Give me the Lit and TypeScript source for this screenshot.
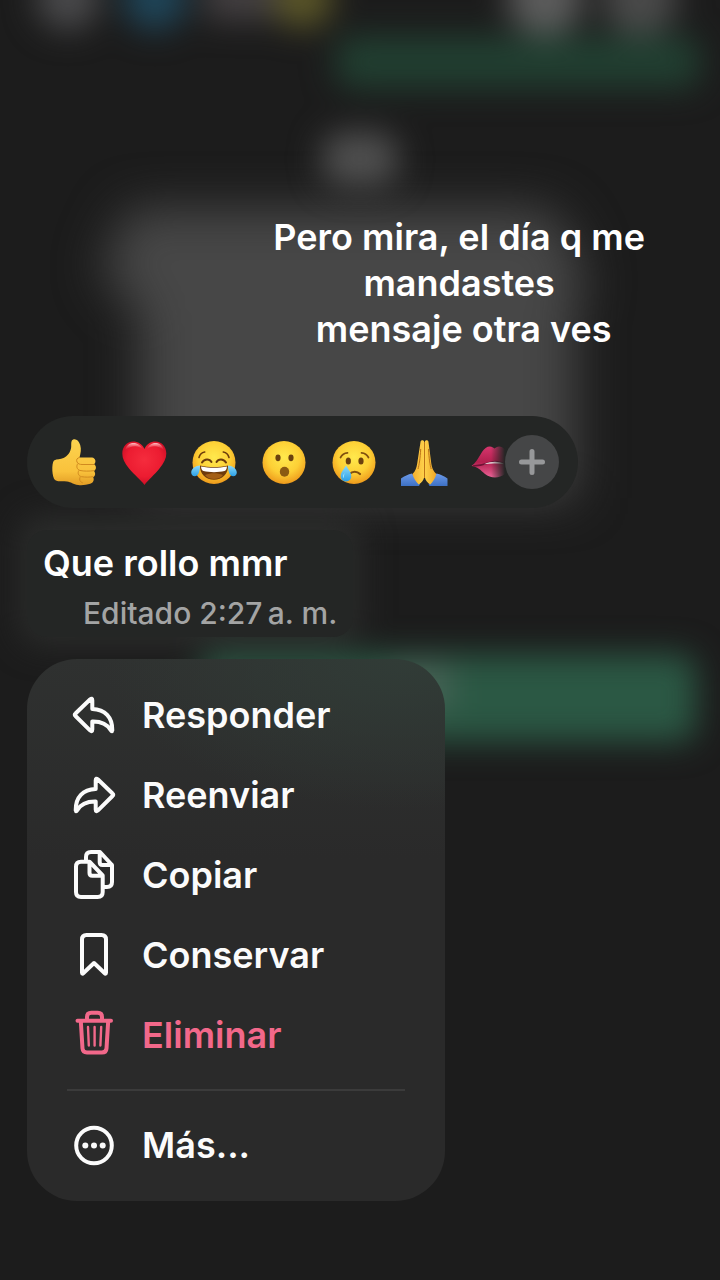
import { LitElement, css, html, svg } from "lit";
import type { SVGTemplateResult } from "lit";
import { customElement, property } from "lit/decorators.js";
import { classMap } from "lit/directives/class-map.js";

const face = svg`
  <defs>
    <radialGradient id="face" cx="50%" cy="38%" r="62%">
      <stop offset="0" stop-color="#ffe94d" />
      <stop offset="0.6" stop-color="#fdcf35" />
      <stop offset="1" stop-color="#ee9a1c" />
    </radialGradient>
    <linearGradient id="tear" x1="0" y1="0" x2="0" y2="1">
      <stop offset="0" stop-color="#8fdcfb" />
      <stop offset="1" stop-color="#2a9fe6" />
    </linearGradient>
  </defs>
  <circle cx="24" cy="24.5" r="21.5" fill="url(#face)" />
`;

const emojis: Record<string, SVGTemplateResult> = {
  "Me gusta": svg`
    <defs>
      <linearGradient id="skin" x1="0" y1="0" x2="0" y2="1">
        <stop offset="0" stop-color="#fdd34f" />
        <stop offset="0.7" stop-color="#f9c23c" />
        <stop offset="1" stop-color="#e39d25" />
      </linearGradient>
    </defs>
    <path fill="url(#skin)" d="M4 22.500c3-1.700 6.500-1 9.500-2.500 4-2 7.300-6 7.700-11 .2-3.500-.4-6.500 2-7.500 3-1 5.800 1.500 7 5.500 1.300 4.300.5 8-.7 12.500H42c3.500.3 4.700 4.700 2 6.800 2.700 1.700 2.500 5.400 0 6.700 1.800 2 1.500 5-.8 6.200 1.300 2.500.2 5.500-3 6.600-3.500 1.200-8.700 1.700-12 1.200-5-.8-7.200-3-11.200-3.500C11.500 43 8 44 5 42c-3-2.500-3.700-16.500-1-19.500z" />
    <path fill="none" stroke="#d18a1f" stroke-width="1" stroke-linecap="round" d="M29.500 19.500c-2.500.5-3.500 2-2.500 4.500 1 2 3 2.500 5 2.500h12M27.500 26c-1.500 2.500-.5 5.500 2.500 6.500 4 .8 9 .8 14 .2M28.500 33c-1 2.500 0 5 3 5.700 4 .6 8 .6 11.500 0M30 39.500c-1 2.300 0 4.500 2.500 5.300" />
  `,
  "Me encanta": svg`
    <defs>
      <radialGradient id="heart" cx="50%" cy="42%" r="60%">
        <stop offset="0" stop-color="#f52c3d" />
        <stop offset="0.65" stop-color="#ec1c31" />
        <stop offset="1" stop-color="#c80d25" />
      </radialGradient>
      <linearGradient id="shine" x1="0" y1="0" x2="0" y2="1">
        <stop offset="0" stop-color="#ffc4c8" />
        <stop offset="1" stop-color="#f52c3d" stop-opacity="0" />
      </linearGradient>
    </defs>
    <path fill="url(#heart)" d="M24.500 47C21 42 14 36.500 9 30.500 4.500 25 2.300 20.500 2.300 15.500 2.300 8.500 7 3.500 13 3.500c5 0 9.300 2.500 11.500 7.500C26.500 6 30.500 3.500 35.500 3.500 41.800 3.500 46.300 8.500 46.300 15.500c0 5-2.300 9.500-6.800 15C34.800 36.500 28 42 24.500 47z" />
    <path fill="url(#shine)" d="M5 12.500C6 7.500 9.500 5 13.500 5c4 0 7.500 2.500 9 6-5-4-11.500-3.500-17.500 1.500zM27 11c1.500-3.500 4.500-6 8.500-6 4 0 7.500 2.500 8.500 7.500-5.500-5-12-5.500-17-1.500z" />
  `,
  "Me divierte": svg`
    ${face}
    <g fill="none" stroke="#6b3c0c" stroke-width="1.600" stroke-linecap="round">
      <path d="M9 19.500c.8-3 3-5 5.700-5.500M39 19.500c-.8-3-3-5-5.700-5.500" />
      <path stroke-width="2" d="M12 24.500c2.500-4 7.500-4 9.500-.5M36 24.500c-2.500-4-7.500-4-9.500-.5" />
    </g>
    <path fill="#6e3b0c" d="M10 27.500c9 2 19 2 28 0 .5 8.500-6 14.200-14 14.200S9.500 36 10 27.500z" />
    <path fill="#fff" d="M11 28.500c9 1.800 17 1.800 26 0-.3 2.700-1 4-2.500 4.500-6 1.500-15 1.500-21 0-1.500-.5-2.300-1.800-2.500-4.500z" />
    <path fill="#a35f16" d="M15 37c6-2.500 12-2.500 18 0-2.500 3-5.500 4-9 4s-6.500-1-9-4z" />
    <path fill="url(#tear)" d="M10 27.500C6 27.500 1.200 30.500 1.200 34.500c0 2.300 1.500 3.700 3.500 3.700 4 0 5.300-5.700 5.300-10.700zM38 27.500c4 0 8.800 3 8.800 7 0 2.300-1.500 3.700-3.500 3.700-4 0-5.300-5.700-5.300-10.700z" />
  `,
  "Me asombra": svg`
    ${face}
    <g fill="#6b400e">
      <ellipse cx="18" cy="19.800" rx="2.600" ry="3.400" />
      <ellipse cx="31" cy="19.800" rx="2.600" ry="3.400" />
    </g>
    <ellipse cx="24.500" cy="33.700" rx="4.700" ry="5" fill="#8b5a12" />
  `,
  "Me entristece": svg`
    ${face}
    <g fill="#6b400e">
      <ellipse cx="18.300" cy="23" rx="2.600" ry="3.600" />
      <ellipse cx="31" cy="23" rx="2.600" ry="3.600" />
    </g>
    <g fill="none" stroke="#80500f" stroke-width="1.700" stroke-linecap="round">
      <path d="M10.500 19.500c1.500-3 4-4.500 7-4.700M38.500 19.500c-1.500-3-4-4.500-7-4.700" />
      <path stroke-width="2.200" d="M19.500 36c3-3 7.500-3 10.500 0" />
    </g>
    <path fill="url(#tear)" d="M16 27.500c2 3.500 5.300 6.800 5.300 10.700 0 3-2.300 5.200-5.300 5.200s-5.300-2.200-5.300-5.200c0-3.900 3.300-7.200 5.300-10.700z" />
    <path fill="#a8e9ff" d="M14.500 35c-1.500 2-2 3.500-1 5.200" />
  `,
  Gracias: svg`
    <defs>
      <linearGradient id="sleeve" x1="0" y1="0" x2="0" y2="1">
        <stop offset="0" stop-color="#6d9bea" />
        <stop offset="1" stop-color="#3d70c4" />
      </linearGradient>
      <linearGradient id="palm" x1="0" y1="0" x2="1" y2="0">
        <stop offset="0" stop-color="#f4ae2d" />
        <stop offset="0.5" stop-color="#ffd34c" />
        <stop offset="1" stop-color="#eea628" />
      </linearGradient>
    </defs>
    <path fill="url(#sleeve)" d="M1 40.500c3.500-2.500 7-4 11-5l8 10.500-1 2H1zM47.500 40.500c-3.500-2.500-7-4-11-5l-8 10.500 1 2h18z" />
    <path fill="url(#palm)" d="M20.500 4c0-2 3.500-2.500 3.700 0v35c-.5 3.500-2.500 5.500-5.500 7.500C16 43.500 13.500 40 12.500 36c3-3 4-6 4.700-10.500zM28.500 4c0-2-3.500-2.500-3.700 0v35c.5 3.500 2.500 5.500 5.500 7.500 2.700-3 5-6.500 6-10.500-3-3-4.500-6-5-10.500z" />
    <path fill="none" stroke="#bd7418" stroke-width="1" d="M24.500 4v36M20.700 11c-.5 9-1.500 16-2.700 20M28.500 11c.5 9 1.500 16 2.700 20" />
  `,
  Beso: svg`
    <defs>
      <linearGradient id="lips" x1="0" y1="0" x2="0" y2="1">
        <stop offset="0" stop-color="#d6366d" />
        <stop offset="0.5" stop-color="#b3204f" />
        <stop offset="1" stop-color="#ea6296" />
      </linearGradient>
    </defs>
    <path fill="url(#lips)" d="M1.500 28c4-3 7-8 10.500-14 3-5 7.500-7 11-4.500l1.500 1 1.500-1c3.500-2.500 8-.5 11 4.500 3.500 6 6.500 11 10.500 14-6 .5-8 4-12.500 8-5.500 4.500-14.500 4.500-20 0C10.500 32 7.500 28.500 1.500 28z" />
    <path fill="none" stroke="#701235" stroke-width="1.500" d="M3 28c7-.5 13-2 17-3.500 5-1.500 6-1.500 11 0 4 1.500 9 3 14 3.500" />
    <path fill="#e8d3d8" d="M14 26.200c8-3.200 14-3.200 21 0-7-1-14-1-21 0z" />
  `,
};

const arrow = svg`
  <path d="M5.500 22.500 20 8.500q2.300-2 2.300.8V18C35 18.300 42.500 26 42.300 39.200q-.3 2-1.500 0C37.500 33.500 32 30.300 22.300 30.500v8q0 2.800-2.300.8L5.500 25q-1.500-1.300 0-2.500z" />
`;

const icons: Record<string, SVGTemplateResult> = {
  reply: arrow,
  forward: svg`<g transform="matrix(-1 0 0 1 48 0)">${arrow}</g>`,
  copy: svg`
    <path d="M19.500 10.700H11q-5 0-5 5V41q0 5 5 5h16.700q5 0 5-5V24.500zM19.500 11v11q0 2.700 2.700 2.700h10.500" />
    <path d="M16 10V6q0-5 5-5h9l12 13v17q0 5-5 5h-4M29.700 1.500v9.800q0 2.700 2.700 2.700H42" />
  `,
  bookmark: svg`<path d="M12 8.500Q12 4 16.500 4h15Q36 4 36 8.500V41.500q0 2-1.500.5L24 32 13.500 42q-1.500 1.500-1.500-.5z" />`,
  trash: svg`
    <path d="M7.500 9.700h33.500M17 9V6q0-4.300 4.300-4.300h6.400Q32 1.700 32 6v3M10.800 10l1.700 27.500q.3 4 4.500 4h15q4.200 0 4.500-4L38.200 10" />
    <path stroke-width="2.400" d="M18 16l.8 18.500M24.600 16v18.500M31.200 16l-.8 18.500" />
  `,
  more: svg`
    <circle cx="24" cy="24.500" r="17.800" />
    <g fill="currentColor" stroke="none">
      <circle cx="15.300" cy="24.500" r="3" />
      <circle cx="24" cy="24.500" r="3" />
      <circle cx="32.700" cy="24.500" r="3" />
    </g>
  `,
};

@customElement("chat-backdrop")
export class ChatBackdrop extends LitElement {
  protected override render() {
    return html`
      <svg viewBox="0 0 720 1280" preserveAspectRatio="none" aria-hidden="true">
        <defs>
          <filter
            id="soft"
            x="-50%"
            y="-50%"
            width="200%"
            height="200%"
            color-interpolation-filters="sRGB"
          >
            <feGaussianBlur stdDeviation="16" />
          </filter>
          <filter
            id="softer"
            x="-50%"
            y="-50%"
            width="200%"
            height="200%"
            color-interpolation-filters="sRGB"
          >
            <feGaussianBlur stdDeviation="24" />
          </filter>
        </defs>
        <g filter="url(#softer)">
          <path fill="#474747" d="M130 208h410q30 10 45 75l-10 30v185H140V315l-40-45z" />
        </g>
        <g filter="url(#soft)">
          <circle cx="68" cy="-2" r="32" fill="#4a4a4c" />
          <circle cx="155" cy="-2" r="32" fill="#1f465a" />
          <rect x="205" y="-30" width="70" height="50" fill="#444042" />
          <circle cx="303" cy="-2" r="30" fill="#5c5728" />
          <circle cx="545" cy="-2" r="38" fill="#5c5c5c" />
          <circle cx="640" cy="-2" r="38" fill="#4a4a4a" />
          <rect x="336" y="36" width="364" height="52" rx="16" fill="#213f31" />
          <rect x="322" y="132" width="76" height="54" rx="22" fill="#505050" />
          <rect x="20" y="515" width="340" height="130" rx="20" fill="#2b2c2b" />
          <rect x="200" y="654" width="496" height="88" rx="16" fill="#2b5844" />
          <rect x="390" y="664" width="60" height="44" fill="#4a6558" />
        </g>
      </svg>
    `;
  }

  static override styles = css`
    :host {
      position: absolute;
      inset: 0;
      background: #1c1c1c;
    }
    svg {
      display: block;
      width: 100%;
      height: 100%;
    }
  `;
}

@customElement("reaction-bar")
export class ReactionBar extends LitElement {
  protected override render() {
    return html`
      <div class="strip">
        ${Object.entries(emojis).map(
          ([name, art]) => html`
            <button class="emoji" type="button" aria-label=${name}>
              <svg viewBox="0 0 48 48" aria-hidden="true">${art}</svg>
            </button>
          `,
        )}
      </div>
      <button class="add" type="button" aria-label="Más reacciones">
        <svg viewBox="0 0 54 54" aria-hidden="true">
          <path d="M27 16.500v21M16.500 27h21" />
        </svg>
      </button>
    `;
  }

  static override styles = css`
    :host {
      box-sizing: border-box;
      display: flex;
      align-items: center;
      width: 100%;
      max-width: 551px;
      padding: 19px 19px 19px 12px;
      border-radius: 46px;
      background: #242625;
    }
    button {
      flex: none;
      padding: 0;
      border: 0;
      background: none;
    }
    .strip {
      display: flex;
      flex: 1;
      min-width: 0;
      overflow: hidden;
      mask-image: linear-gradient(to left, transparent, #000 14px);
    }
    .emoji {
      display: flex;
      justify-content: center;
      width: 70px;
    }
    .emoji svg {
      width: 48px;
      height: 48px;
    }
    .add {
      display: flex;
      width: 54px;
      height: 54px;
      border-radius: 50%;
      background: #454647;
    }
    .add path {
      fill: none;
      stroke: #97989a;
      stroke-width: 5;
      stroke-linecap: round;
    }
  `;
}

@customElement("menu-item")
export class MenuItem extends LitElement {
  @property({ type: String })
  icon = "";

  @property({ type: String })
  label = "";

  @property({ type: Boolean })
  danger = false;

  protected override render() {
    return html`
      <button type="button" class=${classMap({ danger: this.danger })}>
        <svg viewBox="0 0 48 48" aria-hidden="true">${icons[this.icon]}</svg>
        <span>${this.label}</span>
      </button>
    `;
  }

  static override styles = css`
    :host {
      display: block;
    }
    button {
      display: flex;
      align-items: center;
      gap: 24px;
      width: 100%;
      height: 80px;
      padding: 0 43px;
      border: 0;
      background: none;
      color: #fbfbfb;
      font: 600 36px/48px Inter, sans-serif;
      text-align: left;
    }
    .danger {
      color: #f2688a;
    }
    svg {
      flex: none;
      width: 48px;
      height: 48px;
      overflow: visible;
      fill: none;
      stroke: currentColor;
      stroke-width: 4;
      stroke-linecap: round;
      stroke-linejoin: round;
    }
  `;
}

@customElement("app-root")
export class AppRoot extends LitElement {
  protected override render() {
    return html`
      <chat-backdrop></chat-backdrop>
      <main>
        <p class="caption">
          Pero mira, el día q me<br />mandastes<br />&nbsp;mensaje otra ves
        </p>
        <reaction-bar></reaction-bar>
        <article class="bubble">
          <p class="message">Que rollo mmr</p>
          <p class="meta">Editado 2:27&#8239;a. m.</p>
        </article>
        <nav class="menu">
          <menu-item icon="reply" label="Responder"></menu-item>
          <menu-item icon="forward" label="Reenviar"></menu-item>
          <menu-item icon="copy" label="Copiar"></menu-item>
          <menu-item icon="bookmark" label="Conservar"></menu-item>
          <menu-item icon="trash" label="Eliminar" danger></menu-item>
          <hr />
          <menu-item icon="more" label="Más..."></menu-item>
        </nav>
      </main>
    `;
  }

  static override styles = css`
    :host {
      display: block;
      position: relative;
      overflow: hidden;
      min-height: 100vh;
      color: #fff;
      font-family: Inter, sans-serif;
    }
    main {
      position: relative;
      display: flex;
      flex-direction: column;
      align-items: flex-start;
      gap: 22px;
      padding: 214px 27px 79px;
    }
    p {
      margin: 0;
    }
    .caption {
      align-self: flex-end;
      margin: 0 48px 42px 0;
      font-size: 36px;
      font-weight: 600;
      line-height: 46px;
      text-align: center;
    }
    .bubble {
      box-sizing: border-box;
      padding: 10px 16px 2px;
      border-radius: 20px;
      background: #242625;
    }
    .message {
      font-size: 36px;
      font-weight: 600;
      line-height: 46px;
    }
    .meta {
      padding: 6px 0 0 40px;
      color: #a3a4a4;
      font-size: 30px;
      font-weight: 500;
      line-height: 43px;
    }
    .menu {
      box-sizing: border-box;
      width: 100%;
      max-width: 418px;
      padding: 16px 0;
      border-radius: 50px;
      background: radial-gradient(
          ellipse 300px 150px at 90% 0,
          #313c37,
          transparent
        ),
        linear-gradient(#2f3130, #2a2a2a 200px);
    }
    hr {
      height: 2px;
      margin: 14px 40px;
      border: 0;
      background: #3b3b3b;
    }
  `;
}

declare global {
  interface HTMLElementTagNameMap {
    "app-root": AppRoot;
    "chat-backdrop": ChatBackdrop;
    "menu-item": MenuItem;
    "reaction-bar": ReactionBar;
  }
}
